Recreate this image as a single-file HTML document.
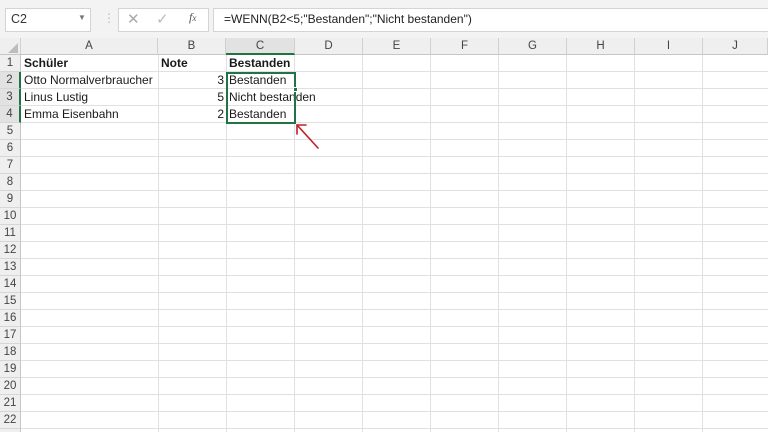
<!DOCTYPE html>
<html style="width:768px;height:432px;overflow:hidden"><head><meta charset="utf-8">
<style>
*{margin:0;padding:0;box-sizing:border-box}
body{width:768px;height:432px;overflow:hidden;background:#fff;font-family:"Liberation Sans",sans-serif;position:relative;color:#222}
.top{position:absolute;left:0;top:0;width:768px;height:38px;background:#f3f3f3}
.box{position:absolute;background:#fff;border:1px solid #d4d4d4}
.abs{position:absolute}
.ch{position:absolute;top:38px;height:17px;background:#efefef;border-right:1px solid #d0d0d0;border-bottom:1px solid #c6c6c6;font-size:11.5px;text-align:center;line-height:17px;color:#444}
.rh{position:absolute;left:0;width:21px;height:17px;background:#efefef;border-bottom:1px solid #d6d6d6;border-right:1px solid #c6c6c6;font-size:11.5px;text-align:center;line-height:17px;color:#444}
.hl{position:absolute;left:21px;width:747px;height:1px;background:#e0e0e0}
.vl{position:absolute;top:55px;width:1px;height:377px;background:#e0e0e0}
.t{position:absolute;font-size:12px;line-height:17px;color:#1a1a1a;white-space:nowrap}
</style></head><body>
<div class="top"></div>
<div class="box" style="left:5px;top:8px;width:86px;height:24px"></div>
<div class="abs" style="left:11px;top:12px;font-size:12.5px;color:#333">C2</div>
<div class="abs" style="left:78px;top:13px;font-size:8px;color:#777">▼</div>
<div class="abs" style="left:103px;top:11px;font-size:12px;color:#bbb">⋮</div>
<div class="box" style="left:118px;top:8px;width:91px;height:24px"></div>
<div class="abs" style="left:127px;top:10px;font-size:15px;color:#aaa">✕</div>
<div class="abs" style="left:156px;top:10px;font-size:15px;color:#bbb">✓</div>
<div class="abs" style="left:189px;top:10px;font-size:12px;font-style:italic;font-family:'Liberation Serif',serif;color:#555">f<span style="font-size:9px">x</span></div>
<div class="box" style="left:213px;top:8px;width:560px;height:24px"></div>
<div class="abs" style="left:224px;top:12px;font-size:12px;color:#222">=WENN(B2&lt;5;"Bestanden";"Nicht bestanden")</div>

<div class="ch" style="left:0;width:21px"><svg width="10" height="10" style="position:absolute;left:8px;top:5px"><polygon points="10,0 10,10 0,10" fill="#bdbdbd"/></svg></div>
<div class="ch" style="left:21px;width:137px">A</div>
<div class="ch" style="left:158px;width:68px">B</div>
<div class="ch" style="left:226px;width:69px;background:#e2e2e2;border-bottom:2px solid #217346">C</div>
<div class="ch" style="left:295px;width:68px">D</div>
<div class="ch" style="left:363px;width:68px">E</div>
<div class="ch" style="left:431px;width:68px">F</div>
<div class="ch" style="left:499px;width:68px">G</div>
<div class="ch" style="left:567px;width:68px">H</div>
<div class="ch" style="left:635px;width:68px">I</div>
<div class="ch" style="left:703px;width:65px">J</div>

<div class="vl" style="left:158px"></div><div class="vl" style="left:226px"></div><div class="vl" style="left:294px"></div><div class="vl" style="left:362px"></div><div class="vl" style="left:430px"></div><div class="vl" style="left:498px"></div><div class="vl" style="left:566px"></div><div class="vl" style="left:634px"></div><div class="vl" style="left:702px"></div>

<div class="rh" style="top:55px">1</div><div class="hl" style="top:71px"></div>
<div class="rh" style="top:72px;background:#e2e2e2;border-right:2px solid #217346">2</div><div class="hl" style="top:88px"></div>
<div class="rh" style="top:89px;background:#e2e2e2;border-right:2px solid #217346">3</div><div class="hl" style="top:105px"></div>
<div class="rh" style="top:106px;background:#e2e2e2;border-right:2px solid #217346">4</div><div class="hl" style="top:122px"></div>
<div class="rh" style="top:123px">5</div><div class="hl" style="top:139px"></div>
<div class="rh" style="top:140px">6</div><div class="hl" style="top:156px"></div>
<div class="rh" style="top:157px">7</div><div class="hl" style="top:173px"></div>
<div class="rh" style="top:174px">8</div><div class="hl" style="top:190px"></div>
<div class="rh" style="top:191px">9</div><div class="hl" style="top:207px"></div>
<div class="rh" style="top:208px">10</div><div class="hl" style="top:224px"></div>
<div class="rh" style="top:225px">11</div><div class="hl" style="top:241px"></div>
<div class="rh" style="top:242px">12</div><div class="hl" style="top:258px"></div>
<div class="rh" style="top:259px">13</div><div class="hl" style="top:275px"></div>
<div class="rh" style="top:276px">14</div><div class="hl" style="top:292px"></div>
<div class="rh" style="top:293px">15</div><div class="hl" style="top:309px"></div>
<div class="rh" style="top:310px">16</div><div class="hl" style="top:326px"></div>
<div class="rh" style="top:327px">17</div><div class="hl" style="top:343px"></div>
<div class="rh" style="top:344px">18</div><div class="hl" style="top:360px"></div>
<div class="rh" style="top:361px">19</div><div class="hl" style="top:377px"></div>
<div class="rh" style="top:378px">20</div><div class="hl" style="top:394px"></div>
<div class="rh" style="top:395px">21</div><div class="hl" style="top:411px"></div>
<div class="rh" style="top:412px">22</div><div class="hl" style="top:428px"></div>
<div class="rh" style="top:429px;height:3px;border-bottom:none"></div>

<div class="t" style="left:24px;top:55px;font-weight:bold">Schüler</div>
<div class="t" style="left:161px;top:55px;font-weight:bold">Note</div>
<div class="t" style="left:229px;top:55px;font-weight:bold">Bestanden</div>
<div class="t" style="left:24px;top:72px">Otto Normalverbraucher</div>
<div class="t" style="left:24px;top:89px">Linus Lustig</div>
<div class="t" style="left:24px;top:106px">Emma Eisenbahn</div>
<div class="t" style="left:160px;top:72px;width:64px;text-align:right">3</div>
<div class="t" style="left:160px;top:89px;width:64px;text-align:right">5</div>
<div class="t" style="left:160px;top:106px;width:64px;text-align:right">2</div>
<div class="t" style="left:229px;top:72px">Bestanden</div>
<div class="t" style="left:229px;top:89px">Nicht bestanden</div>
<div class="t" style="left:229px;top:106px">Bestanden</div>

<div class="abs" style="left:226px;top:72px;width:70px;height:52px;border:2px solid #217346"></div>
<div class="abs" style="left:293px;top:87px;width:5px;height:5px;background:#217346;border:1px solid #fff"></div>

<svg class="abs" style="left:0;top:0" width="768" height="432">
<g stroke="#c0202a" stroke-width="1.6" fill="none" stroke-linecap="round">
<line x1="318" y1="148" x2="297" y2="125"/>
<line x1="297" y1="125" x2="306" y2="125"/>
<line x1="297" y1="125" x2="297" y2="134"/>
</g>
</svg>
</body></html>
